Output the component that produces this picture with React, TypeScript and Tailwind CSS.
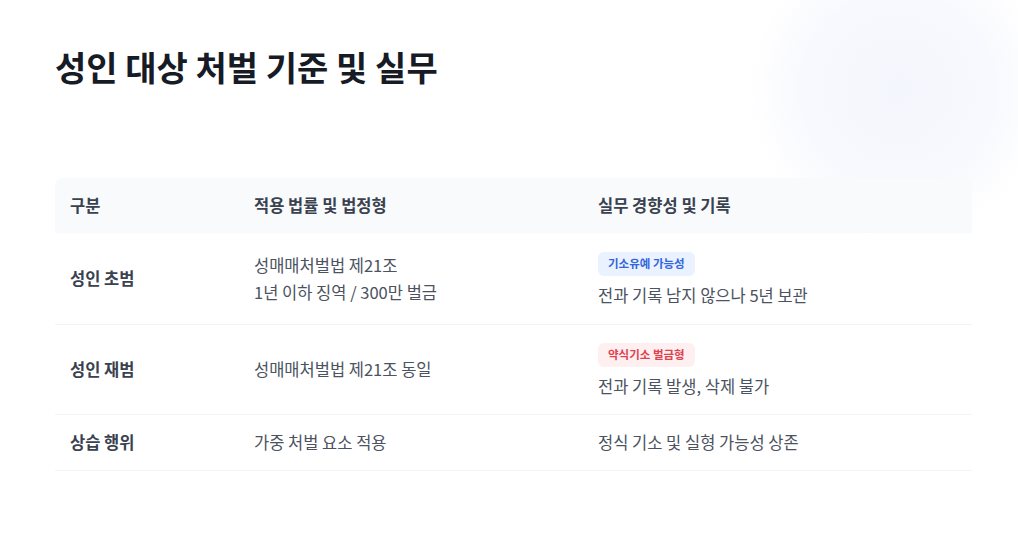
const rows = [
  {
    label: '성인 초범',
    law: ['성매매처벌법 제21조', '1년 이하 징역 / 300만 벌금'],
    badge: { text: '기소유예 가능성', tone: 'blue' as const },
    note: '전과 기록 남지 않으나 5년 보관',
    h: 'h-[92px]',
  },
  {
    label: '성인 재범',
    law: ['성매매처벌법 제21조 동일'],
    badge: { text: '약식기소 벌금형', tone: 'red' as const },
    note: '전과 기록 발생, 삭제 불가',
    h: 'h-[90px]',
  },
  {
    label: '상습 행위',
    law: ['가중 처벌 요소 적용'],
    badge: null,
    note: '정식 기소 및 실형 가능성 상존',
    h: 'h-[56px]',
  },
];

export default function App() {
  return (
    <div
      className="relative w-[1018px] h-[553px] overflow-hidden bg-white"
      style={{ fontFamily: '"Noto Sans CJK KR", "Noto Sans", sans-serif' }}
    >
      {/* soft background glow */}
      <div className="absolute right-[-30px] top-[-60px] w-[300px] h-[300px] rounded-full bg-[radial-gradient(circle,#f4f6fd_0%,#f8f9fe_45%,rgba(255,255,255,0)_70%)]" />

      <div className="relative px-[55px] pt-[46px]">
        <h1 className="text-[34px] leading-[42px] font-bold text-[#161b26]">
          성인 대상 처벌 기준 및 실무
        </h1>

        <div className="mt-[90px] w-[917px]">
          <div className="grid grid-cols-[183px_344px_1fr] h-[55px] items-center bg-[#f8fafc] rounded-t-lg text-[16.5px] font-bold text-[#3a4250]">
            <div className="pl-[15px]">구분</div>
            <div className="pl-4">적용 법률 및 법정형</div>
            <div className="pl-4">실무 경향성 및 기록</div>
          </div>

          {rows.map((r) => (
            <div
              key={r.label}
              className={`grid grid-cols-[183px_344px_1fr] items-center border-b border-[#f2f4f7] ${r.h}`}
            >
              <div className="pl-[15px] text-[16.5px] font-bold text-[#3a4250]">{r.label}</div>
              <div className="pl-4 text-[16.5px] leading-[27px] text-[#4b5260]">
                {r.law.map((l) => (
                  <div key={l}>{l}</div>
                ))}
              </div>
              <div className="pl-4 text-[16.5px] leading-[27px] text-[#4b5260]">
                {r.badge && (
                  <div className="mb-[6px] mt-[3px] leading-none">
                    <span
                      className={
                        r.badge.tone === 'blue'
                          ? 'inline-flex h-6 items-center rounded-md px-[10px] text-[11.5px] font-bold bg-[#eaf2ff] text-[#3366dd]'
                          : 'inline-flex h-6 items-center rounded-md px-[10px] text-[11.5px] font-bold bg-[#fef0f1] text-[#e0414f]'
                      }
                    >
                      {r.badge.text}
                    </span>
                  </div>
                )}
                <div>{r.note}</div>
              </div>
            </div>
          ))}
        </div>
      </div>
    </div>
  );
}
